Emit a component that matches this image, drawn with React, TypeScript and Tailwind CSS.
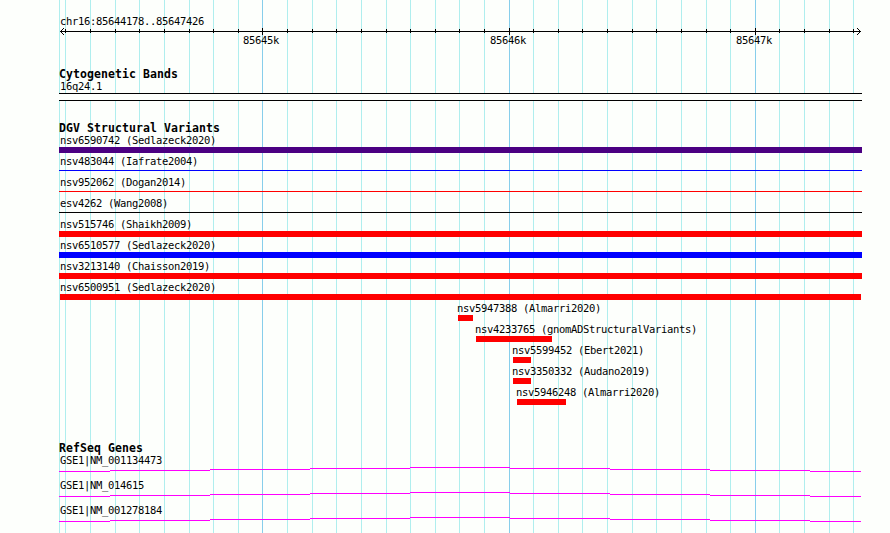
interface Variant {
    label: string;
    start: number;
    end: number;
    color: string;
    thin?: boolean;
}

const MINOR_LINES = [
    59, 65, 90, 115, 139, 164, 189, 213, 238, 287, 312, 336, 361, 386, 410, 435, 459, 484,
    533, 558, 582, 607, 632, 656, 681, 706, 730, 779, 804, 829, 853
];

const MAJOR_LINES = [
    { x: 262, label: '85645k' },
    { x: 509, label: '85646k' },
    { x: 755, label: '85647k' }
];

const VARIANTS: Variant[] = [
    { label: 'nsv6590742 (Sedlazeck2020)', start: 59, end: 862, color: 'bg-[#4b0082]' },
    { label: 'nsv483044 (Iafrate2004)', start: 59, end: 862, color: 'bg-[#0000ff]', thin: true },
    { label: 'nsv952062 (Dogan2014)', start: 59, end: 862, color: 'bg-[#ff0000]', thin: true },
    { label: 'esv4262 (Wang2008)', start: 59, end: 862, color: 'bg-black', thin: true },
    { label: 'nsv515746 (Shaikh2009)', start: 59, end: 862, color: 'bg-[#ff0000]' },
    { label: 'nsv6510577 (Sedlazeck2020)', start: 59, end: 862, color: 'bg-[#0000ff]' },
    { label: 'nsv3213140 (Chaisson2019)', start: 59, end: 862, color: 'bg-[#ff0000]' },
    { label: 'nsv6500951 (Sedlazeck2020)', start: 60, end: 861, color: 'bg-[#ff0000]' },
    { label: 'nsv5947388 (Almarri2020)', start: 458, end: 473, color: 'bg-[#ff0000]' },
    { label: 'nsv4233765 (gnomADStructuralVariants)', start: 476, end: 552, color: 'bg-[#ff0000]' },
    { label: 'nsv5599452 (Ebert2021)', start: 513, end: 531, color: 'bg-[#ff0000]' },
    { label: 'nsv3350332 (Audano2019)', start: 513, end: 531, color: 'bg-[#ff0000]' },
    { label: 'nsv5946248 (Almarri2020)', start: 517, end: 566, color: 'bg-[#ff0000]' }
];

const GENES = ['GSE1|NM_001134473', 'GSE1|NM_014615', 'GSE1|NM_001278184'];

// The intron line climbs one pixel per step to the middle and back down
const INTRON_STEPS = [
    [0, 51, 4],
    [51, 151, 3],
    [151, 251, 2],
    [251, 351, 1],
    [351, 451, 0],
    [451, 551, 1],
    [551, 651, 2],
    [651, 751, 3],
    [751, 802, 4]
];

const LABEL = "block h-3 whitespace-pre font-['DejaVu_Sans_Mono','Liberation_Mono',monospace] text-[10.5px] tracking-[-0.322px]";

function TrackTitle({ children }: { children: string }) {
    return (
        <h2 className="h-3 whitespace-pre pl-[59px] font-['DejaVu_Sans_Mono','Liberation_Mono',monospace] text-[11.5px] font-bold leading-3 tracking-[0.077px]">
            {children}
        </h2>
    );
}

function GridLines() {
    return (
        <svg className="absolute inset-0" width="890" height="533" shapeRendering="crispEdges">
            {MINOR_LINES.map((x) => (
                <rect key={x} x={x} y="0" width="1" height="533" fill="#afeeee" />
            ))}
            {MAJOR_LINES.map(({ x }) => (
                <rect key={x} x={x} y="0" width="1" height="533" fill="#87ceeb" />
            ))}
        </svg>
    );
}

function Ruler() {
    return (
        <svg className="block" width="890" height="7" shapeRendering="crispEdges">
            <rect x="60" y="3" width="801" height="1" />
            {MINOR_LINES.slice(1).map((x) => (
                <rect key={x} x={x} y="1" width="1" height="4" />
            ))}
            {MAJOR_LINES.map(({ x }) => (
                <rect key={x} x={x} y="0" width="1" height="7" />
            ))}
            {[1, 2, 3].map((d) => (
                <g key={d}>
                    <rect x={60 + d} y={3 - d} width="1" height="1" />
                    <rect x={60 + d} y={3 + d} width="1" height="1" />
                    <rect x={860 - d} y={3 - d} width="1" height="1" />
                    <rect x={860 - d} y={3 + d} width="1" height="1" />
                </g>
            ))}
        </svg>
    );
}

function VariantRow({ variant }: { variant: Variant }) {
    const { label, start, end, color, thin } = variant;
    return (
        <div className="h-[21px]">
            <span className={`${LABEL} leading-[10px]`} style={{ paddingLeft: Math.max(start - 1, 60) }}>{label}</span>
            <div className="flex h-1.5 items-start">
                <div
                    className={`${color} ${thin ? 'mt-[2px] h-px' : 'h-1.5'}`}
                    style={{ marginLeft: start, width: end - start }}
                />
            </div>
        </div>
    );
}

function GeneRow({ name }: { name: string }) {
    return (
        <div className="h-[25px]">
            <span className={`${LABEL} pl-[60px] leading-[10px]`}>{name}</span>
            <svg className="ml-[59px] block" width="802" height="5" shapeRendering="crispEdges">
                {INTRON_STEPS.map(([from, to, y]) => (
                    <rect key={from} x={from} y={y} width={to - from} height="1" fill="#ff00ff" />
                ))}
            </svg>
        </div>
    );
}

export default function App() {
    return (
        <main className="relative h-[533px] w-[890px] overflow-hidden bg-[#fdfffc] text-black">
            <GridLines />
            <div className="relative flex flex-col">
                {/* Scale */}
                <header className="pt-4">
                    <span className={`${LABEL} pl-[60px] leading-[10px]`}>chr16:85644178..85647426</span>
                    <Ruler />
                    <div className="flex pl-[243px]">
                        {MAJOR_LINES.map(({ x, label }, i) => (
                            <span key={x} className={`${LABEL} shrink-0 leading-[10px] ${i === 0 ? 'w-[247px]' : 'w-[246px]'}`}>{label}</span>
                        ))}
                    </div>
                </header>

                {/* Cytogenetic bands */}
                <section className="pt-[21px]">
                    <TrackTitle>Cytogenetic Bands</TrackTitle>
                    <span className={`${LABEL} pl-[60px] leading-3`}>16q24.1</span>
                    <div className="ml-[59px] mt-px h-2 w-[803px] border-y border-black bg-[#fdfffc]" />
                </section>

                {/* Structural variants */}
                <section className="pt-[21px]">
                    <TrackTitle>DGV Structural Variants</TrackTitle>
                    <div className="pt-px">
                        {VARIANTS.map((v) => (
                            <VariantRow key={v.label} variant={v} />
                        ))}
                    </div>
                </section>

                {/* Genes */}
                <section className="pt-[34px]">
                    <TrackTitle>RefSeq Genes</TrackTitle>
                    <div className="pt-px">
                        {GENES.map((name) => (
                            <GeneRow key={name} name={name} />
                        ))}
                    </div>
                </section>
            </div>
        </main>
    );
}
